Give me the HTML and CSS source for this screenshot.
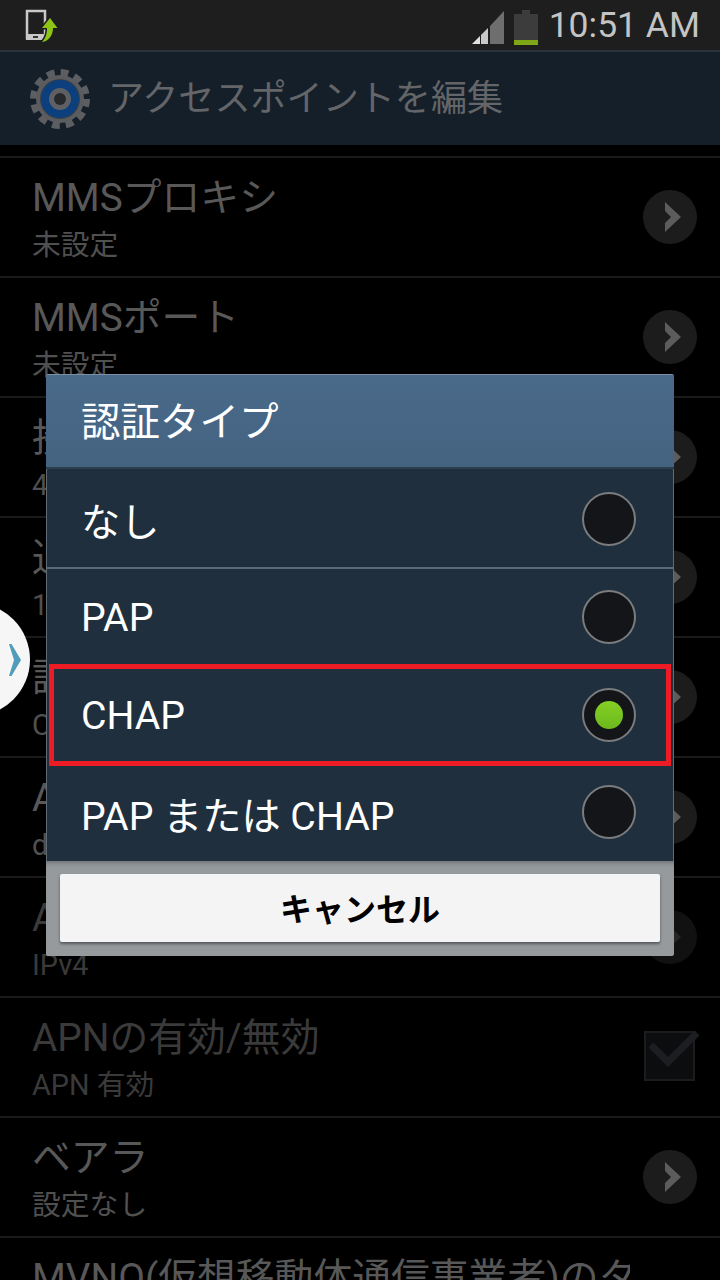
FILE: index.html
```html
<!DOCTYPE html>
<html lang="ja">
<head>
<meta charset="utf-8">
<title>アクセスポイントを編集</title>
<link rel="stylesheet" href="styles.css">
</head>
<body>
<div class="screen">
  <header class="status">
    <svg class="notify" width="36" height="34" viewBox="0 0 36 34">
      <path d="M3 2h18v27H3z" fill="none" stroke="#c8c8c8" stroke-width="2.5"/>
      <rect x="2" y="25" width="20" height="6" fill="#c8c8c8"/>
      <rect x="9" y="27" width="5" height="2" fill="#333"/>
      <path d="M26 9l7.5 10H29c0 7-4 13-11 14 3-3 5-7 5-14h-5z" fill="#1e1e1e" stroke="#1e1e1e" stroke-width="3"/>
      <path d="M26 9l7.5 10H29c0 7-4 13-11 14 3-3 5-7 5-14h-5z" fill="#8cc514"/>
    </svg>
    <div class="status-right">
      <svg class="signal" width="34" height="34" viewBox="0 0 34 34">
        <path d="M1 34l8-8v8z" fill="#e0e0e0"/>
        <path d="M10 34v-9l7-7v16z" fill="#c8c8c8"/>
        <path d="M19 34V16L33 1v33z" fill="#6e6e6e"/>
      </svg>
      <svg class="battery" width="24" height="35" viewBox="0 0 24 35">
        <rect x="8" y="0" width="8" height="4" fill="#3c3c3c"/>
        <rect x="0" y="4" width="24" height="26" fill="#3c3c3c"/>
        <rect x="0" y="30" width="24" height="5" fill="#7ea615"/>
      </svg>
      <span class="clock">10:51 AM</span>
    </div>
  </header>

  <div class="titlebar">
    <svg class="gear" width="62" height="62" viewBox="0 0 62 62">
      <circle cx="31" cy="31" r="26" fill="none" stroke="#5c5e62" stroke-width="8" stroke-dasharray="7.6 6" />
      <circle cx="31" cy="31" r="24" fill="#5a5c60"/>
      <circle cx="31" cy="31" r="20" fill="#3c4046"/>
      <circle cx="31" cy="31" r="19" fill="#0b3f7d"/>
      <circle cx="31" cy="31" r="11" fill="#5e6064"/>
      <circle cx="31" cy="31" r="6" fill="#26282c"/>
    </svg>
    <span class="title-text">アクセスポイントを編集</span>
  </div>

  <main class="list">
    <div class="row">
      <div class="row-text"><div class="row-title">MMSプロキシ</div><div class="row-sub">未設定</div></div>
      <span class="go"><svg width="16" height="30" viewBox="0 0 16 30"><path d="M0 0l16 15L0 30v-9l6-6-6-6z" fill="#5c5c5c"/></svg></span>
    </div>
    <div class="row">
      <div class="row-text"><div class="row-title">MMSポート</div><div class="row-sub">未設定</div></div>
      <span class="go"><svg width="16" height="30" viewBox="0 0 16 30"><path d="M0 0l16 15L0 30v-9l6-6-6-6z" fill="#5c5c5c"/></svg></span>
    </div>
    <div class="row">
      <div class="row-text"><div class="row-title">接続先ポート</div><div class="row-sub">440</div></div>
      <span class="go"><svg width="16" height="30" viewBox="0 0 16 30"><path d="M0 0l16 15L0 30v-9l6-6-6-6z" fill="#5c5c5c"/></svg></span>
    </div>
    <div class="row">
      <div class="row-text"><div class="row-title">通信事業者</div><div class="row-sub">10</div></div>
      <span class="go"><svg width="16" height="30" viewBox="0 0 16 30"><path d="M0 0l16 15L0 30v-9l6-6-6-6z" fill="#5c5c5c"/></svg></span>
    </div>
    <div class="row">
      <div class="row-text"><div class="row-title">認証タイプ</div><div class="row-sub">CHAP</div></div>
      <span class="go"><svg width="16" height="30" viewBox="0 0 16 30"><path d="M0 0l16 15L0 30v-9l6-6-6-6z" fill="#5c5c5c"/></svg></span>
    </div>
    <div class="row">
      <div class="row-text"><div class="row-title">APNタイプ</div><div class="row-sub">default</div></div>
      <span class="go"><svg width="16" height="30" viewBox="0 0 16 30"><path d="M0 0l16 15L0 30v-9l6-6-6-6z" fill="#5c5c5c"/></svg></span>
    </div>
    <div class="row">
      <div class="row-text"><div class="row-title dim">APNプロトコル</div><div class="row-sub dim">IPv4</div></div>
      <span class="go faint"><svg width="16" height="30" viewBox="0 0 16 30"><path d="M0 0l16 15L0 30v-9l6-6-6-6z" fill="#262626"/></svg></span>
    </div>
    <div class="row">
      <div class="row-text"><div class="row-title dim">APNの有効/無効</div><div class="row-sub dim">APN 有効</div></div>
      <span class="check"><svg width="56" height="56" viewBox="0 0 56 56"><path d="M6 20l17 17L52 8" fill="none" stroke="#1c1e22" stroke-width="7"/></svg></span>
    </div>
    <div class="row">
      <div class="row-text"><div class="row-title">ベアラ</div><div class="row-sub">設定なし</div></div>
      <span class="go"><svg width="16" height="30" viewBox="0 0 16 30"><path d="M0 0l16 15L0 30v-9l6-6-6-6z" fill="#5c5c5c"/></svg></span>
    </div>
    <div class="row">
      <div class="row-text clip"><div class="row-title">MVNO(仮想移動体通信事業者)のタイプ</div></div>
    </div>
  </main>

  <div class="handle">
    <svg width="12" height="32" viewBox="0 0 12 32"><path d="M0 0h2.500l9.500 16-9.500 16H0l5-16z" fill="#4f9dbb"/></svg>
  </div>

  <section class="dialog">
    <h2 class="dialog-title">認証タイプ</h2>
    <div class="options">
      <div class="option sep"><span>なし</span><i class="radio"></i></div>
      <div class="option"><span>PAP</span><i class="radio"></i></div>
      <div class="option selected"><span>CHAP</span><i class="radio on"></i></div>
      <div class="option"><span>PAP または CHAP</span><i class="radio"></i></div>
    </div>
    <div class="dialog-foot"><button class="cancel">キャンセル</button></div>
  </section>
</div>
</body>
</html>
```

FILE: styles.css
```css
* { box-sizing: border-box; }
html, body { margin: 0; padding: 0; background: #000; }
.screen {
  position: relative;
  width: 720px;
  height: 1280px;
  overflow: hidden;
  background: #000;
  font-family: Roboto, "Noto Sans CJK JP", sans-serif;
}
.status {
  height: 50px;
  background: #1e1e1e;
  display: flex;
  align-items: center;
  justify-content: space-between;
  padding: 0 20px 0 24px;
}
.notify { display: block; margin-top: 1px; }
.status-right { display: flex; align-items: center; }
.signal { display: block; margin-top: 4px; margin-right: 9px; }
.battery { display: block; margin-top: 4px; margin-right: 11px; }
.clock { font-size: 35.5px; color: #c4c4c4; line-height: 50px; }
.titlebar {
  height: 95px;
  background: #151f29;
  border-top: 2px solid #27323a;
  display: flex;
  align-items: center;
  padding-left: 29px;
  padding-bottom: 2px;
}
.gear { display: block; margin-right: 17px; margin-top: 2px; }
.title-text { font-size: 36.1px; line-height: 60px; margin-top: 2px; color: #636568; font-weight: 400; }
.list { padding-top: 11px; }
.row {
  height: 120px;
  border-top: 2px solid #1a1a1a;
  display: flex;
  align-items: flex-start;
  justify-content: space-between;
  padding: 0 23px 0 32px;
}
.row-text { white-space: nowrap; }
.row-text.clip { width: 598px; overflow: hidden; }
.row-title { font-size: 38.8px; line-height: 50px; margin-top: 15px; color: #585858; }
.row-sub { font-size: 28.8px; line-height: 36px; margin-top: 4px; color: #505050; }
.row-title.dim { color: #3a3a3a; }
.row-sub.dim { color: #3a3a3a; }
.go {
  flex: none;
  width: 54px;
  height: 54px;
  margin-top: 32px;
  border-radius: 50%;
  background: #1c1c1c;
  display: flex;
  align-items: center;
  justify-content: center;
  padding-left: 5px;
}
.go.faint { background: #111; }
.go svg { display: block; }
.check {
  flex: none;
  width: 51px;
  height: 50px;
  margin-top: 33px;
  margin-right: 2px;
  background: #0c0d0f;
  border: 2px solid #1c1c1c;
  position: relative;
}
.check svg { position: absolute; left: -1px; top: -8px; }
.handle {
  position: absolute;
  left: -83px;
  top: 603px;
  width: 113px;
  height: 113px;
  border-radius: 50%;
  background: #f6f6f6;
  display: flex;
  align-items: center;
  justify-content: flex-end;
  padding-right: 9px;
}
.handle svg { display: block; }
.dialog {
  position: absolute;
  left: 46px;
  top: 374px;
  width: 628px;
  height: 582px;
  background: #969a9d;
  border-radius: 3px;
  overflow: hidden;
  display: flex;
  flex-direction: column;
}
.dialog-title {
  margin: 0;
  height: 95px;
  padding: 0 0 6px 35px;
  display: flex;
  align-items: center;
  font-size: 39.500px;
  font-weight: 400;
  color: #fff;
  background: linear-gradient(#4a6a8a, #446381);
  border-top: 1px solid #7b90a4;
  border-bottom: 2px solid #2c3f50;
}
.options { background: #1f2f3e; height: 392px; display: flex; flex-direction: column; border-left: 1px solid #5f6b75; border-right: 1px solid #5f6b75; }
.option {
  height: 98px;
  display: flex;
  align-items: center;
  justify-content: space-between;
  padding: 0 37px 0 34px;
  color: #fff;
  font-size: 39.200px;
  position: relative;
}
.option span { margin-top: 2px; }
.option.sep { height: 100px; padding-top: 2px; border-bottom: 2px solid #5b6a78; }
.option.sep span { margin-top: 0; }
.selected::after {
  content: "";
  position: absolute;
  left: 2px;
  right: 2px;
  top: -2px;
  bottom: -2px;
  border: 5px solid #ed1c24;
}
.radio {
  display: block;
  width: 54px;
  height: 54px;
  border-radius: 50%;
  background: #141518;
  border: 2px solid #7a7c7e;
  position: relative;
}
.radio.on::after {
  content: "";
  position: absolute;
  left: 11px;
  top: 11px;
  width: 28px;
  height: 28px;
  border-radius: 50%;
  background: linear-gradient(#84d025, #6cb81c);
}
.dialog-foot { flex: 1; padding: 13px 14px 14px; background: #969a9d; box-shadow: inset 0 6px 5px -4px #6e7275; }
.cancel {
  display: block;
  width: 100%;
  height: 68px;
  border: 0;
  border-radius: 2px;
  background: #f4f4f4;
  box-shadow: 0 2px 3px #55585a;
  color: #000;
  font-family: Roboto, "Noto Sans CJK JP", sans-serif;
  font-size: 32px;
  font-weight: 700;
  padding: 0 0 2px;
}
```
